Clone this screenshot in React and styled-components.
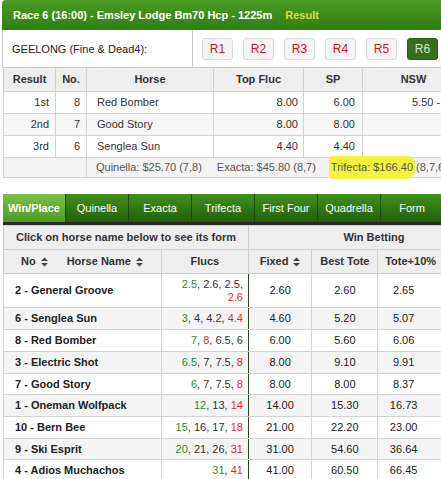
import React from 'react';
import styled, { createGlobalStyle } from 'styled-components';

const GlobalStyle = createGlobalStyle`
  html, body { margin: 0; padding: 0; background: #fff; }
  body {
    font-family: "Liberation Sans", Arial, sans-serif;
    font-size: 11px;
    color: #222;
    overflow: hidden;
  }
`;

const Page = styled.div`
  width: 441px;
  height: 479px;
  overflow: hidden;
  padding-left: 2px;
  box-sizing: border-box;
`;

const RaceHeader = styled.div`
  height: 30px;
  width: 460px;
  display: flex;
  align-items: center;
  padding-left: 11px;
  box-sizing: border-box;
  background: linear-gradient(#4c9b25, #2f7e12);
  border-radius: 4px 0 0 0;
  color: #fff;
  font-weight: bold;
  white-space: nowrap;
`;

const ResultTag = styled.span`
  color: #e4d640;
  margin-left: 13px;
`;

const InfoRow = styled.div`
  display: flex;
  height: 38px;
  width: 460px;
  box-sizing: border-box;
  border-left: 1px solid #ccc;
  border-bottom: 1px solid #ccc;
`;

const TrackCell = styled.div`
  width: 190px;
  flex: none;
  display: flex;
  align-items: center;
  padding-left: 9px;
  box-sizing: border-box;
  border-right: 1px solid #ccc;
  color: #222;
`;

const RaceButtons = styled.div`
  display: flex;
  align-items: center;
  gap: 10px;
  padding-left: 9px;
`;

const RaceButton = styled.div`
  width: 31px;
  height: 22px;
  box-sizing: border-box;
  display: flex;
  align-items: center;
  justify-content: center;
  border-radius: 3px;
  font-size: 12px;
  border: 1px solid ${p => (p.$active ? '#2b5d16' : '#d9d9d9')};
  background: ${p => (p.$active ? '#356f1d' : '#f5f5f5')};
  color: ${p => (p.$active ? '#d6ebc6' : '#d0101e')};
`;

const ResultsTable = styled.table`
  border-collapse: collapse;
  table-layout: fixed;
  width: 461px;
  margin-left: 1px;

  th {
    background: #eeeeee;
    color: #333;
    font-weight: bold;
    padding: 5px 4px;
    line-height: 13px;
    border: 1px solid #cfcfcf;
    border-top: none;
  }
`;

const ResCell = styled.td`
  padding: 4px ${p => p.$pr || 6}px 4px ${p => p.$pl || 6}px;
  line-height: 13px;
  border: 1px solid #d4d4d4;
  text-align: ${p => p.$align || 'right'};
  color: #333;
  white-space: nowrap;
`;

const ResRow = styled.tr`
  background: ${p => (p.$shade ? '#f6f6f6' : '#fff')};
`;

const DivRow = styled.tr`
  background: #f3f3f3;
`;

const DivCell = styled.td`
  padding: 3px 9px;
  line-height: 13px;
  border: 1px solid #d4d4d4;
  color: #555;
  white-space: nowrap;
`;

const Dividend = styled.span`
  margin-right: 15px;
`;

const Highlight = styled.span`
  background: #f4f23c;
  padding: 5px 2px 6px;
  margin: 0 -2px;
  border-radius: 3px 6px 9px 4px;
`;

const Tabs = styled.div`
  display: flex;
  margin-top: 16px;
  margin-left: 1px;
  height: 28px;
  border-bottom: 3px solid #2b2b2b;
`;

const Tab = styled.div`
  width: 63px;
  flex: none;
  text-align: center;
  line-height: 28px;
  color: #fff;
  font-weight: ${p => (p.$active ? 'bold' : 'normal')};
  background: ${p => (p.$active
    ? 'linear-gradient(#7cc04a, #4d9925)'
    : 'linear-gradient(#41911d, #21600b)')};
  border-right: 1px solid #1d4c0b;
  box-sizing: border-box;
  white-space: nowrap;
`;

const OddsTable = styled.table`
  border-collapse: collapse;
  table-layout: fixed;
  width: 497px;
  margin-left: 1px;
`;

const HeadCell = styled.th`
  background: #eeeeee;
  color: #333;
  font-weight: bold;
  padding: 5px 4px;
  line-height: 13px;
  border: 1px solid #cfcfcf;
  text-align: ${p => p.$align || 'center'};
  white-space: nowrap;
`;

const HeadLabel = styled.span`
  display: inline-flex;
  align-items: center;
  gap: 5px;
  margin-left: ${p => p.$ml || 0}px;
`;

const OddsRow = styled.tr`
  background: ${p => (p.$shade ? '#f4f4f4' : '#fff')};
`;

const NameCell = styled.td`
  padding: 4px 4px 4px 11px;
  line-height: 12.7px;
  border: 1px solid #d4d4d4;
  font-weight: bold;
  color: #222;
  white-space: nowrap;
`;

const FlucCell = styled.td`
  padding: 4px 5px 4px 8px;
  line-height: 12.7px;
  border: 1px solid #d4d4d4;
  border-right: 1px solid #2c4420;
  text-align: right;
  color: #333;
`;

const Fluc = styled.span`
  color: ${p => (p.$kind === 'open' ? '#2a8a2a' : p.$kind === 'last' ? '#e31f2b' : '#333')};
`;

const PriceCell = styled.td`
  padding: 4px ${p => p.$pr || 4}px 4px 4px;
  line-height: 12.7px;
  border: 1px solid #d4d4d4;
  text-align: center;
  color: #222;
`;

const SortIcon = () => (
  <svg width="7" height="10" viewBox="0 0 7 10">
    <polygon points="0,4 3.5,0.5 7,4" fill="#444" />
    <polygon points="0,6 3.5,9.5 7,6" fill="#444" />
  </svg>
);

const results = [
  { pos: '1st', no: 8, horse: 'Red Bomber', top: '8.00', sp: '6.00', nsw: '5.50 - 6.00' },
  { pos: '2nd', no: 7, horse: 'Good Story', top: '8.00', sp: '8.00', nsw: '' },
  { pos: '3rd', no: 6, horse: 'Senglea Sun', top: '4.40', sp: '4.40', nsw: '' },
];

const runners = [
  { name: '2 - General Groove', flucs: ['2.5', '2.6', '2.5', '2.6'], kinds: ['open', '', '', 'last'], fixed: '2.60', tote: '2.60', plus: '2.65' },
  { name: '6 - Senglea Sun', flucs: ['3', '4', '4.2', '4.4'], kinds: ['open', '', '', 'last'], fixed: '4.60', tote: '5.20', plus: '5.07' },
  { name: '8 - Red Bomber', flucs: ['7', '8', '6.5', '6'], kinds: ['open', 'last', '', ''], fixed: '6.00', tote: '5.60', plus: '6.06' },
  { name: '3 - Electric Shot', flucs: ['6.5', '7', '7.5', '8'], kinds: ['open', '', '', 'last'], fixed: '8.00', tote: '9.10', plus: '9.91' },
  { name: '7 - Good Story', flucs: ['6', '7', '7.5', '8'], kinds: ['open', '', '', 'last'], fixed: '8.00', tote: '8.00', plus: '8.37' },
  { name: '1 - Oneman Wolfpack', flucs: ['12', '13', '14'], kinds: ['open', '', 'last'], fixed: '14.00', tote: '15.30', plus: '16.73' },
  { name: '10 - Bern Bee', flucs: ['15', '16', '17', '18'], kinds: ['open', '', '', 'last'], fixed: '21.00', tote: '22.20', plus: '23.00' },
  { name: '9 - Ski Esprit', flucs: ['20', '21', '26', '31'], kinds: ['open', '', '', 'last'], fixed: '31.00', tote: '54.60', plus: '36.64' },
  { name: '4 - Adios Muchachos', flucs: ['31', '41'], kinds: ['open', 'last'], fixed: '41.00', tote: '60.50', plus: '66.45' },
];

const tabs = ['Win/Place', 'Quinella', 'Exacta', 'Trifecta', 'First Four', 'Quadrella', 'Form'];

function Flucs({ values, kinds }) {
  return values.map((v, i) => (
    <React.Fragment key={i}>
      <Fluc $kind={kinds[i]}>{v}</Fluc>
      {i < values.length - 1 ? ', ' : ''}
    </React.Fragment>
  ));
}

export default function App() {
  return (
    <Page>
      <GlobalStyle />
      <RaceHeader>
        Race 6 (16:00) - Emsley Lodge Bm70 Hcp - 1225m
        <ResultTag>Result</ResultTag>
      </RaceHeader>

      <InfoRow>
        <TrackCell>GEELONG (Fine &amp; Dead4):</TrackCell>
        <RaceButtons>
          {['R1', 'R2', 'R3', 'R4', 'R5', 'R6'].map(r => (
            <RaceButton key={r} $active={r === 'R6'}>{r}</RaceButton>
          ))}
        </RaceButtons>
      </InfoRow>

      <ResultsTable>
        <colgroup>
          <col style={{ width: 52 }} />
          <col style={{ width: 31 }} />
          <col style={{ width: 127 }} />
          <col style={{ width: 90 }} />
          <col style={{ width: 59 }} />
          <col style={{ width: 102 }} />
        </colgroup>
        <thead>
          <tr>
            <th>Result</th>
            <th>No.</th>
            <th>Horse</th>
            <th>Top Fluc</th>
            <th>SP</th>
            <th>NSW</th>
          </tr>
        </thead>
        <tbody>
          {results.map((r, i) => (
            <ResRow key={r.pos} $shade={i === 1}>
              <ResCell>{r.pos}</ResCell>
              <ResCell>{r.no}</ResCell>
              <ResCell $align="left" $pl={10}>{r.horse}</ResCell>
              <ResCell $pr={5}>{r.top}</ResCell>
              <ResCell $pr={7}>{r.sp}</ResCell>
              <ResCell $align="left" $pl={49}>{r.nsw}</ResCell>
            </ResRow>
          ))}
          <DivRow>
            <DivCell colSpan={2} />
            <DivCell colSpan={4}>
              <Dividend>Quinella: $25.70 (7,8)</Dividend>
              <Dividend>Exacta: $45.80 (8,7)</Dividend>
              <span><Highlight>Trifecta: $166.40</Highlight> (8,7,6)</span>
            </DivCell>
          </DivRow>
        </tbody>
      </ResultsTable>

      <Tabs>
        {tabs.map(t => (
          <Tab key={t} $active={t === 'Win/Place'}>{t}</Tab>
        ))}
      </Tabs>

      <OddsTable>
        <colgroup>
          <col style={{ width: 157 }} />
          <col style={{ width: 87 }} />
          <col style={{ width: 63 }} />
          <col style={{ width: 66 }} />
          <col style={{ width: 65 }} />
          <col style={{ width: 56 }} />
        </colgroup>
        <thead>
          <tr>
            <HeadCell colSpan={2}>Click on horse name below to see its form</HeadCell>
            <HeadCell colSpan={4}>Win Betting</HeadCell>
          </tr>
          <tr>
            <HeadCell $align="left">
              <HeadLabel $ml={13}>No <SortIcon /></HeadLabel>
              <HeadLabel $ml={19}>Horse Name <SortIcon /></HeadLabel>
            </HeadCell>
            <HeadCell>Flucs</HeadCell>
            <HeadCell><HeadLabel>Fixed <SortIcon /></HeadLabel></HeadCell>
            <HeadCell>Best Tote</HeadCell>
            <HeadCell>Tote+10%</HeadCell>
            <HeadCell />
          </tr>
        </thead>
        <tbody>
          {runners.map((r, i) => (
            <OddsRow key={r.name} $shade={i % 2 === 1}>
              <NameCell>{r.name}</NameCell>
              <FlucCell><Flucs values={r.flucs} kinds={r.kinds} /></FlucCell>
              <PriceCell>{r.fixed}</PriceCell>
              <PriceCell>{r.tote}</PriceCell>
              <PriceCell $pr={18}>{r.plus}</PriceCell>
              <PriceCell />
            </OddsRow>
          ))}
        </tbody>
      </OddsTable>
    </Page>
  );
}
